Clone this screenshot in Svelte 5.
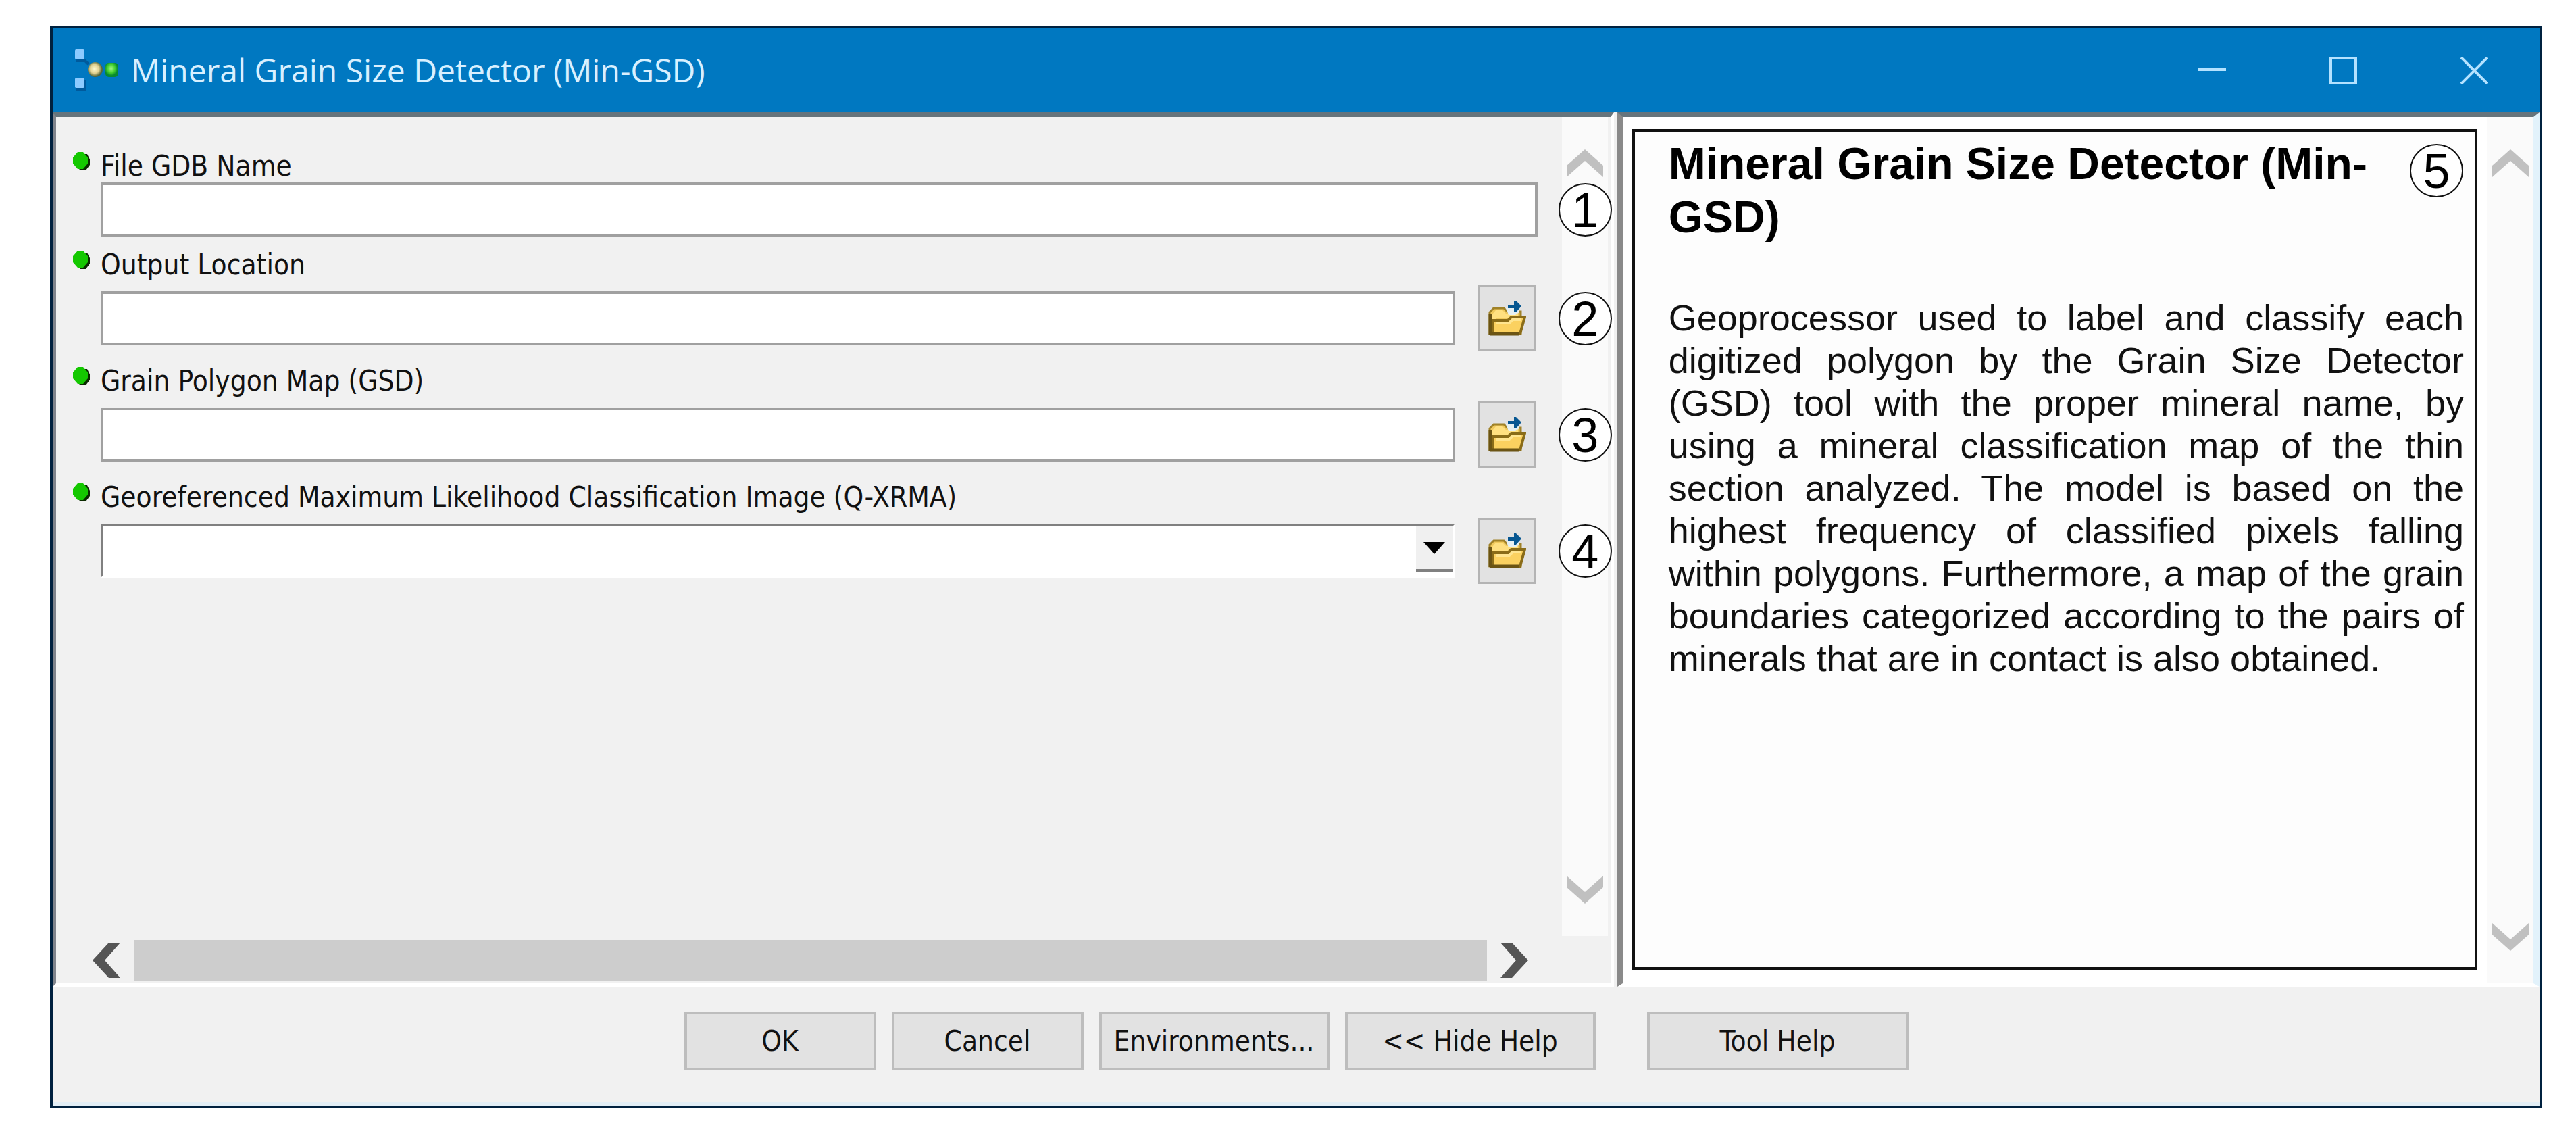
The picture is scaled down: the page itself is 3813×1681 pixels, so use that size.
<script>
    let fields = [
        { id: 'gdb', label: 'File GDB Name', value: '', type: 'text' },
        { id: 'output', label: 'Output Location', value: '', type: 'path' },
        { id: 'polygons', label: 'Grain Polygon Map (GSD)', value: '', type: 'path' },
        {
            id: 'image',
            label: 'Georeferenced Maximum Likelihood Classification Image (Q-XRMA)',
            value: '',
            type: 'select'
        }
    ];

    const title = 'Mineral Grain Size Detector (Min-GSD)';
</script>

{#snippet chevron(points, width, height)}
    <svg {width} {height} viewBox="0 0 {width} {height}" aria-hidden="true">
        <polygon {points} fill="currentColor" />
    </svg>
{/snippet}

<div class="desktop">
    <main class="window">
        <header class="titlebar">
            <svg class="app-icon" width="66" height="66" viewBox="0 0 66 66" aria-hidden="true">
                <defs>
                    <radialGradient id="yellow" cx="0.45" cy="0.45">
                        <stop offset="0" stop-color="#fffbd0" />
                        <stop offset="0.6" stop-color="#e0d090" />
                        <stop offset="1" stop-color="#56683c" />
                    </radialGradient>
                    <radialGradient id="green" cx="0.45" cy="0.4">
                        <stop offset="0" stop-color="#a4f888" />
                        <stop offset="0.6" stop-color="#44d030" />
                        <stop offset="1" stop-color="#088a30" />
                    </radialGradient>
                </defs>
                <path d="M3 19h13l5 5M3 61h13V47" fill="none" stroke="#005a9c" stroke-width="4" />
                <rect x="1" y="2" width="14" height="15" rx="2" fill="#8dcbff" />
                <rect x="1" y="44" width="14" height="15" rx="2" fill="#8dcbff" />
                <circle cx="31" cy="32" r="11" fill="url(#yellow)" />
                <rect x="46" y="22" width="19" height="21" rx="5" fill="url(#green)" />
            </svg>
            <h1>{title}</h1>
            <div class="window-controls">
                <button aria-label="Minimize">
                    <svg width="41" height="41" viewBox="0 0 41 41"><path d="M0 18.500h41" stroke-width="5" /></svg>
                </button>
                <button aria-label="Maximize">
                    <svg width="41" height="41" viewBox="0 0 41 41"><path d="M2 2h37v37H2z" stroke-width="4" /></svg>
                </button>
                <button aria-label="Close">
                    <svg width="41" height="41" viewBox="0 0 41 41"><path d="M1 1l39 39M40 1L1 40" stroke-width="4" /></svg>
                </button>
            </div>
        </header>

        <div class="panes">
            <section class="pane form-pane">
                <div class="form-area">
                    <form>
                        {#each fields as field, i}
                            <div class="field">
                                <label for={field.id}>
                                    <svg class="bullet" width="27" height="30" viewBox="0 0 27 30" aria-hidden="true">
                                        <path d="M16 4h6l4 8v8l-6 8h-8l-5-5z" fill="#0a2a00" />
                                        <path d="M8 1h8l7 8v9l-7 8H8l-7-8V9z" fill="#14c800" />
                                    </svg>
                                    {field.label}
                                </label>
                                <div class="row">
                                    {#if field.type === 'select'}
                                        <div class="combo">
                                            <select id={field.id} bind:value={field.value}><option value=""></option></select>
                                            <span class="drop">
                                                <svg width="32" height="18" viewBox="0 0 32 18" aria-hidden="true"><path d="M0 0h32L16 18z" /></svg>
                                            </span>
                                        </div>
                                    {:else}
                                        <input id={field.id} type="text" bind:value={field.value} />
                                    {/if}
                                    {#if field.type !== 'text'}
                                        <button type="button" class="browse" aria-label="Browse">
                                            <svg width="56" height="52" viewBox="0 0 56 52" aria-hidden="true">
                                                <path d="M2 49V17l6-6h15l5 5h20v33z" fill="#f0c95c" stroke="#a08228" stroke-width="3" />
                                                <path d="M6 20l5-6h10l5 5h18v7H12L6 40z" fill="#ffe080" />
                                                <path d="M7 49V29h22l5-5h20l-7 25z" fill="#fbd160" stroke="#8a6c18" stroke-width="4" />
                                                <path d="M11 33h20l5-5h13" fill="none" stroke="#ffe590" stroke-width="4" />
                                                <path d="M3 50V20M2 49h44" fill="none" stroke="#6b5414" stroke-width="5" />
                                                <path d="M26 11h20v6l-6 4H30z" fill="#e6f0f2" />
                                                <path d="M29 6h9V0h3l8 8-8 9h-3v-6h-9z" fill="#075791" />
                                            </svg>
                                        </button>
                                    {/if}
                                    <span class="badge">{i + 1}</span>
                                </div>
                            </div>
                        {/each}
                    </form>
                    <div class="hscroll">
                        <button aria-label="Scroll left">{@render chevron('0,26 24,0 41,0 18,26 41,52 24,52', 41, 52)}</button>
                        <div class="thumb"></div>
                        <button aria-label="Scroll right">{@render chevron('41,26 17,0 0,0 23,26 0,52 17,52', 41, 52)}</button>
                    </div>
                </div>
                <div class="vscroll short">
                    <button aria-label="Scroll up">{@render chevron('0,24 27,0 54,24 54,41 27,17 0,41', 54, 41)}</button>
                    <button aria-label="Scroll down">{@render chevron('0,17 27,41 54,17 54,0 27,24 0,0', 54, 41)}</button>
                </div>
            </section>

            <section class="pane help-pane">
                <article class="help">
                    <h2>{title}</h2>
                    <p>
                        Geoprocessor used to label and classify each digitized polygon by the Grain Size Detector (GSD)
                        tool with the proper mineral name, by using a mineral classification map of the thin section
                        analyzed. The model is based on the highest frequency of classified pixels falling within
                        polygons. Furthermore, a map of the grain boundaries categorized according to the pairs of
                        minerals that are in contact is also obtained.
                    </p>
                    <span class="badge">5</span>
                </article>
                <div class="vscroll">
                    <button aria-label="Scroll up">{@render chevron('0,24 27,0 54,24 54,41 27,17 0,41', 54, 41)}</button>
                    <button aria-label="Scroll down">{@render chevron('0,17 27,41 54,17 54,0 27,24 0,0', 54, 41)}</button>
                </div>
            </section>
        </div>

        <footer>
            <button>OK</button>
            <button>Cancel</button>
            <button class="wide">Environments...</button>
            <button class="wider">&lt;&lt; Hide Help</button>
            <button class="tool-help">Tool Help</button>
        </footer>
    </main>
</div>

<style>
    :global(body) {
        margin: 0;
        background: #fff;
    }

    * {
        box-sizing: border-box;
    }

    button {
        padding: 0;
        border: 0;
        background: none;
        font: inherit;
        color: inherit;
    }

    svg {
        display: block;
        flex: none;
    }

    .desktop {
        display: flex;
        min-height: 100vh;
        padding: 38px 50px 41px 74px;
        font-family: 'DejaVu Sans Condensed', 'DejaVu Sans', sans-serif;
        font-size: 42px;
        line-height: 48px;
        color: #111;
    }

    .window {
        flex: 1;
        display: flex;
        flex-direction: column;
        min-width: 0;
        border: 4px solid #00213f;
        background: #f1f1f1;
    }

    .titlebar {
        display: flex;
        align-items: center;
        height: 124px;
        padding-left: 32px;
        background: #0078c1;
        color: #d8f0ff;
    }

    h1 {
        flex: 1;
        margin: 0 0 0 18px;
        font: 400 48px/60px 'Open Sans', sans-serif;
    }

    .window-controls {
        display: flex;
    }

    .window-controls button {
        display: flex;
        justify-content: center;
        width: 194px;
    }

    .window-controls path {
        fill: none;
        stroke: #b4e2ff;
    }

    .panes {
        flex: 1;
        display: flex;
        gap: 5px;
    }

    .pane {
        display: flex;
        border: solid;
        border-width: 7px 5px 5px;
        border-color: #66747c #fff #fff #80848c;
    }

    .form-pane {
        flex: 2302;
        min-width: 0;
    }

    .form-area {
        flex: 1;
        display: flex;
        flex-direction: column;
        justify-content: space-between;
        min-width: 0;
    }

    form {
        padding: 49px 36px 0 66px;
    }

    .field label {
        position: relative;
        display: block;
        padding-bottom: 6px;
    }

    .field:first-child label {
        padding-bottom: 0;
    }

    .bullet {
        position: absolute;
        left: -42px;
        top: 2px;
    }

    .row {
        position: relative;
        display: flex;
        align-items: center;
        gap: 34px;
        height: 98px;
        margin-bottom: 20px;
    }

    .field:first-child .row {
        height: 80px;
        margin-bottom: 18px;
    }

    input,
    .combo {
        flex: 1;
        min-width: 0;
        height: 80px;
        padding: 0 12px;
        border: 4px solid #a0a0a0;
        background: #fff;
        font: inherit;
    }

    .combo {
        display: flex;
        padding: 0;
        border-color: #808080 #fff #fff #808080;
    }

    select {
        flex: 1;
        min-width: 0;
        border: 0;
        appearance: none;
        background: #fff;
        font: inherit;
    }

    .drop {
        display: flex;
        align-items: center;
        justify-content: center;
        width: 54px;
        margin-bottom: 4px;
        border-bottom: 5px solid #808080;
        background: #f0f0f0;
    }

    .browse {
        display: flex;
        align-items: center;
        justify-content: center;
        width: 86px;
        height: 98px;
        border: 3px solid #b4b4b4;
        background: #e2e2e2;
    }

    .field .row:has(.browse) {
        padding-right: 2px;
    }

    .badge {
        position: absolute;
        right: -110px;
        width: 79px;
        height: 79px;
        border: 2px solid #111;
        border-radius: 50%;
        background: #fff;
        font: 72px/76px 'Liberation Sans', Arial, sans-serif;
        text-align: center;
        color: #000;
    }

    .hscroll {
        display: flex;
        align-items: center;
        gap: 20px;
        height: 68px;
        padding: 0 50px 0 54px;
        color: #555;
    }

    .thumb {
        flex: 1;
        height: 61px;
        background: #cdcdcd;
    }

    .vscroll {
        display: flex;
        flex-direction: column;
        justify-content: space-between;
        align-items: center;
        width: 68px;
        padding: 48px 0;
        background: #fafafa;
        color: #c0c0c0;
    }

    .vscroll.short {
        margin: 0 4px 70px 0;
    }

    .help-pane {
        flex: 1349;
        min-width: 0;
        border-left-width: 8px;
        border-left-color: #8a8a8a;
        border-right: 9px solid #e2f2fb;
        background: #fff;
    }

    .help {
        position: relative;
        flex: 1;
        min-width: 0;
        margin: 18px 15px 20px 14px;
        padding: 8px 16px 40px 50px;
        border: 4px solid #111;
        background: #fdfdfd;
        font-family: 'Liberation Sans', Arial, sans-serif;
        color: #111;
    }

    .help .badge {
        top: 18px;
        right: 17px;
    }

    h2 {
        margin: 0 120px 78px 0;
        font-size: 66px;
        line-height: 79px;
        color: #000;
    }

    p {
        margin: 0;
        font-size: 54px;
        line-height: 63px;
        text-align: justify;
    }

    footer {
        display: flex;
        justify-content: center;
        gap: 23px;
        padding: 37px 0 46px;
        border-bottom: 6px solid #e2eef6;
    }

    footer button {
        width: 284px;
        height: 87px;
        border: 4px solid #bdbdbd;
        background: #e2e2e2;
    }

    footer .wide {
        width: 341px;
    }

    footer .wider {
        width: 371px;
    }

    footer .tool-help {
        width: 387px;
        margin-left: 53px;
    }
</style>
